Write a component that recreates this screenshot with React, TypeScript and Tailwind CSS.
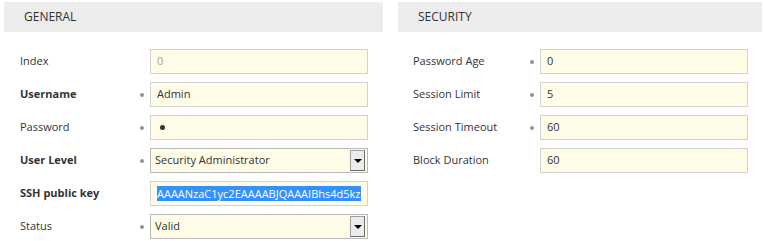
import React from 'react';

type Row = {
  label: string;
  bold?: boolean;
  dot?: boolean;
  value: string;
  kind?: 'text' | 'select' | 'disabled' | 'password' | 'selected';
};

const general: Row[] = [
  { label: 'Index', value: '0', kind: 'disabled' },
  { label: 'Username', bold: true, dot: true, value: 'Admin' },
  { label: 'Password', dot: true, value: '', kind: 'password' },
  { label: 'User Level', bold: true, dot: true, value: 'Security Administrator', kind: 'select' },
  { label: 'SSH public key', bold: true, value: 'AAAANzaC1yc2EAAAABJQAAAIBhs4d5kz', kind: 'selected' },
  { label: 'Status', dot: true, value: 'Valid', kind: 'select' },
];

const security: Row[] = [
  { label: 'Password Age', dot: true, value: '0' },
  { label: 'Session Limit', dot: true, value: '5' },
  { label: 'Session Timeout', dot: true, value: '60' },
  { label: 'Block Duration', value: '60' },
];

const Field: React.FC<{ row: Row }> = ({ row }) => {
  const kind = row.kind ?? 'text';

  if (kind === 'select') {
    return (
      <div className="flex-1 h-[25px] flex items-center bg-[#fefbe6] border border-[#b9b9b9] pl-[4px] pr-[2px] text-[#333]">
        <span className="flex-1 truncate">{row.value}</span>
        <div className="w-[15px] h-[21px] flex items-center justify-center bg-[#ececec] border border-[#6b6b6b] border-t-[#a0a0a0] border-l-[#a0a0a0]">
          <div className="w-0 h-0 border-l-[4px] border-r-[4px] border-t-[4px] border-l-transparent border-r-transparent border-t-black" />
        </div>
      </div>
    );
  }

  return (
    <div className="flex-1 h-[25px] flex items-center bg-[#fefbe6] border border-[#d2d2d2] pl-[6px] pr-[4px] overflow-hidden whitespace-nowrap">
      {kind === 'disabled' && <span className="text-[#a0a0a0]">{row.value}</span>}
      {kind === 'text' && <span className="text-[#333]">{row.value}</span>}
      {kind === 'password' && <span className="w-[5px] h-[5px] rounded-full bg-[#333] ml-[3px]" />}
      {kind === 'selected' && (
        <span className="bg-[#3390ff] text-white leading-[15px]">{row.value}</span>
      )}
    </div>
  );
};

const Section: React.FC<{
  title: string;
  rows: Row[];
  className: string;
  labelW: string;
  pad: string;
}> = ({ title, rows, className, labelW, pad }) => (
  <div className={className}>
    <div className="h-[30px] bg-[#ececec] flex items-center pl-[20px] text-[12px] text-[#333] uppercase">
      {title}
    </div>
    <div className={`mt-[13px] flex flex-col ${pad}`}>
      {rows.map((row) => (
        <div key={row.label} className="h-[33px] flex items-center">
          <div className={`${labelW} shrink-0 text-[#333] ${row.bold ? 'font-bold' : ''}`}>{row.label}</div>
          <div className="w-[10px] shrink-0 flex items-center">
            {row.dot && <span className="w-[4px] h-[4px] rounded-full bg-[#8a93a0]" />}
          </div>
          <Field row={row} />
        </div>
      ))}
    </div>
  </div>
);

export default function App() {
  return (
    <div
      className="w-[765px] h-[241px] bg-white flex pl-[4px] pt-[2px] gap-[15px] text-[11px] overflow-hidden"
      style={{ fontFamily: '"Open Sans", "Noto Sans", sans-serif' }}
    >
      <Section
        title="General"
        rows={general}
        className="w-[379px]"
        labelW="w-[120px]"
        pad="pl-[16px] pr-[15px]"
      />
      <Section
        title="Security"
        rows={security}
        className="w-[364px]"
        labelW="w-[117px]"
        pad="pl-[15px] pr-[14px]"
      />
    </div>
  );
}
